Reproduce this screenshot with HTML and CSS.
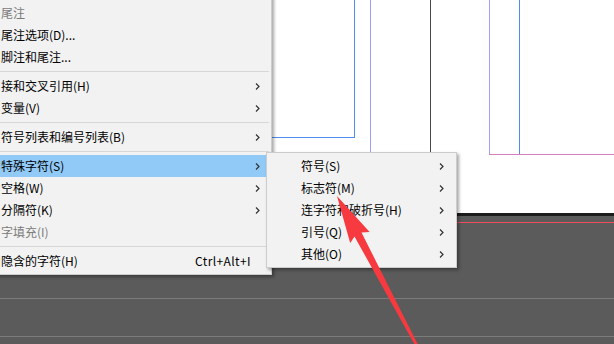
FILE: index.html
```html
<!DOCTYPE html>
<html lang="zh-CN">
<head>
    <meta charset="UTF-8">
    <meta name="viewport" content="width=device-width, initial-scale=1.0">
    <title>特殊字符</title>
    <link rel="stylesheet" href="styles.css">
</head>
<body>
    <div class="workspace">
        <div class="page">
            <div class="guide margin-box"></div>
            <div class="guide column-purple"></div>
            <div class="guide spine"></div>
            <div class="guide right-box"></div>
            <div class="guide column-blue"></div>
        </div>
        <div class="page-edge"></div>
        <div class="pasteboard">
            <div class="bleed-line"></div>
            <div class="track track-1"></div>
            <div class="track track-2"></div>
        </div>
    </div>

    <ul class="menu menu-main">
        <li class="item disabled"><span class="label">尾注</span></li>
        <li class="item"><span class="label">尾注选项(D)...</span></li>
        <li class="item"><span class="label">脚注和尾注...</span></li>
        <li class="sep"></li>
        <li class="item"><span class="label">接和交叉引用(H)</span><svg class="chevron" width="5" height="7" viewBox="0 0 5 7"><polyline points="1,0.5 4,3.5 1,6.5"/></svg></li>
        <li class="item"><span class="label">变量(V)</span><svg class="chevron" width="5" height="7" viewBox="0 0 5 7"><polyline points="1,0.5 4,3.5 1,6.5"/></svg></li>
        <li class="sep"></li>
        <li class="item"><span class="label">符号列表和编号列表(B)</span><svg class="chevron" width="5" height="7" viewBox="0 0 5 7"><polyline points="1,0.5 4,3.5 1,6.5"/></svg></li>
        <li class="sep"></li>
        <li class="item active"><span class="label">特殊字符(S)</span><svg class="chevron" width="5" height="7" viewBox="0 0 5 7"><polyline points="1,0.5 4,3.5 1,6.5"/></svg></li>
        <li class="item"><span class="label">空格(W)</span><svg class="chevron" width="5" height="7" viewBox="0 0 5 7"><polyline points="1,0.5 4,3.5 1,6.5"/></svg></li>
        <li class="item"><span class="label">分隔符(K)</span><svg class="chevron" width="5" height="7" viewBox="0 0 5 7"><polyline points="1,0.5 4,3.5 1,6.5"/></svg></li>
        <li class="item disabled"><span class="label">字填充(I)</span></li>
        <li class="sep"></li>
        <li class="item"><span class="label">隐含的字符(H)</span><span class="shortcut">Ctrl+Alt+I</span></li>
    </ul>

    <ul class="menu menu-sub">
        <li class="item"><span class="label">符号(S)</span><svg class="chevron" width="5" height="7" viewBox="0 0 5 7"><polyline points="1,0.5 4,3.5 1,6.5"/></svg></li>
        <li class="item"><span class="label">标志符(M)</span><svg class="chevron" width="5" height="7" viewBox="0 0 5 7"><polyline points="1,0.5 4,3.5 1,6.5"/></svg></li>
        <li class="item"><span class="label">连字符和破折号(H)</span><svg class="chevron" width="5" height="7" viewBox="0 0 5 7"><polyline points="1,0.5 4,3.5 1,6.5"/></svg></li>
        <li class="item"><span class="label">引号(Q)</span><svg class="chevron" width="5" height="7" viewBox="0 0 5 7"><polyline points="1,0.5 4,3.5 1,6.5"/></svg></li>
        <li class="item"><span class="label">其他(O)</span><svg class="chevron" width="5" height="7" viewBox="0 0 5 7"><polyline points="1,0.5 4,3.5 1,6.5"/></svg></li>
    </ul>

    <!-- annotation arrow pointing at 标志符 -->
    <svg class="pointer" width="614" height="344" viewBox="0 0 614 344">
        <polygon points="337,196 369.6,232 361.5,232.5 420.6,350 418,350.7 354.5,236.5 350.2,243"/>
    </svg>
</body>
</html>
```

FILE: styles.css
```css
* {
    box-sizing: border-box;
}

html, body {
    margin: 0;
    padding: 0;
}

body {
    position: relative;
    width: 614px;
    height: 344px;
    overflow: hidden;
    background: #5b5b5b;
    font-family: "Noto Sans CJK SC", "Noto Sans", sans-serif;
    font-size: 12px;
}

/* document canvas */
.workspace {
    display: flex;
    flex-direction: column;
    height: 100%;
}

.page {
    position: relative;
    flex: none;
    height: 213px;
    background: #fff;
}

.page-edge {
    flex: none;
    height: 3px;
    background: #1c1c1c;
}

.pasteboard {
    flex: 1;
    padding-top: 6px;
    background: #5b5b5b;
}

.bleed-line {
    height: 1px;
    background: #ee4f5f;
}

.track {
    height: 1px;
    background: #7b7b7b;
}

.track-1 {
    margin-top: 75px;
}

.track-2 {
    margin-top: 37px;
}

.guide {
    position: absolute;
}

.margin-box {
    left: 0;
    top: 0;
    width: 355px;
    height: 138px;
    border-right: 1px solid #4d8ff0;
    border-bottom: 1px solid #4d8ff0;
}

.column-purple {
    left: 370px;
    top: 0;
    width: 1px;
    height: 213px;
    background: #9f9df7;
}

.spine {
    left: 430px;
    top: 0;
    width: 1px;
    height: 213px;
    background: #474747;
}

.right-box {
    left: 489px;
    top: 0;
    right: 0;
    height: 155px;
    border-left: 1px solid #9f9df7;
    border-bottom: 1px solid #d67fbf;
}

.column-blue {
    left: 519px;
    top: 0;
    width: 1px;
    height: 154px;
    background: #4d8ff0;
}

/* context menus */
.menu {
    position: absolute;
    margin: 0;
    list-style: none;
    background: #f2f2f2;
    border: 1px solid #cccccc;
    box-shadow: 2px 2px 3px rgba(0, 0, 0, 0.35);
    color: #000;
}

.menu-main {
    left: -40px;
    top: -10px;
    width: 312px;
    padding: 11px 2px 2px;
}

.menu-sub {
    left: 266px;
    top: 152px;
    width: 191px;
    padding: 2px;
}

.item {
    display: flex;
    align-items: center;
    height: 22px;
    padding: 0 9px 1px 38px;
    white-space: nowrap;
}

.menu-sub .item {
    padding: 0 10px 1px 32px;
}

.item.active {
    background: #91c9f7;
}

.item.disabled {
    color: #7a7a7a;
}

.label {
    flex: 1;
}

.shortcut {
    margin-right: 9px;
    letter-spacing: 0.4px;
}

.chevron {
    flex: none;
    margin-top: 1px;
}

.chevron polyline {
    fill: none;
    stroke: #333;
    stroke-width: 1.2;
}

.sep {
    height: 1px;
    margin: 3px 0 3px 30px;
    background: #d7d7d7;
}

.pointer {
    position: absolute;
    left: 0;
    top: 0;
    pointer-events: none;
}

.pointer polygon {
    fill: #f63a3f;
}
```
